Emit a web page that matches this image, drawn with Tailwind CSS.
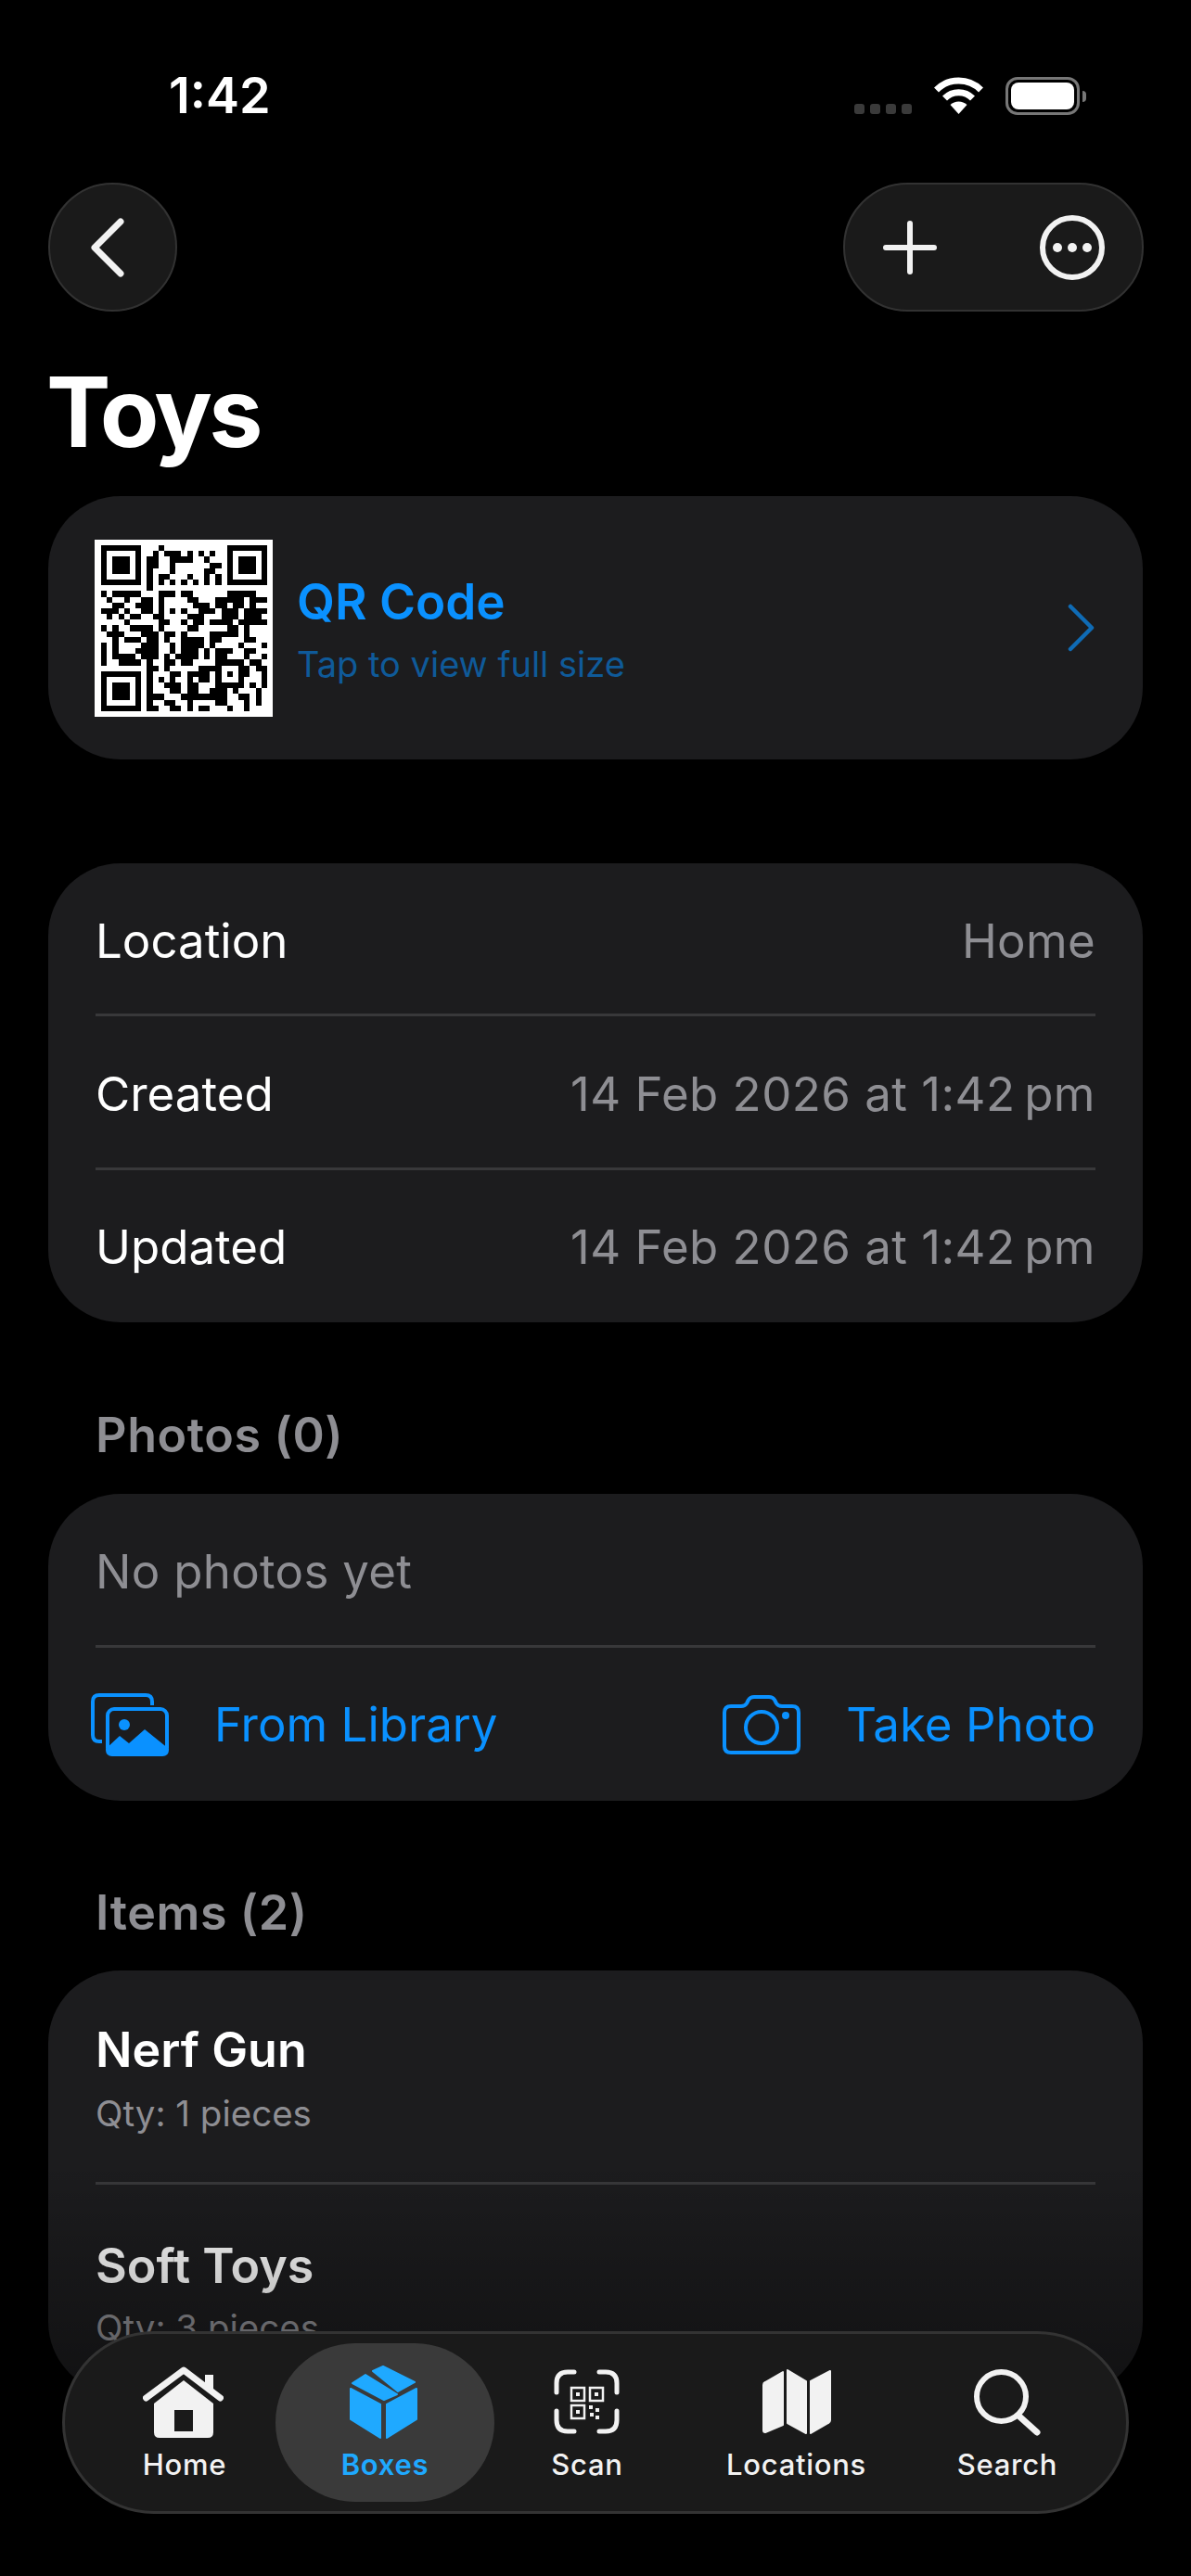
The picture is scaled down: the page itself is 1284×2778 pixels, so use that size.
<!DOCTYPE html>
<html lang="en">
<head>
<meta charset="utf-8">
<title>Toys</title>
<script src="https://cdn.jsdelivr.net/npm/@tailwindcss/browser@4"></script>
</head>
<body class="bg-black">
<div class="relative w-[1284px] h-[2778px] overflow-hidden bg-black text-white font-['Inter','Noto_Sans',sans-serif]">

  <!-- status bar -->
  <div class="h-[197px] pl-[182px] pr-[113px] flex justify-between items-start">
    <div class="mt-[71px] text-[54px] leading-[64px] font-semibold">1:42</div>
    <div class="flex items-start mt-[83px]">
      <div class="flex gap-[6px] mt-[29px] mr-[24px]">
        <span class="w-[11px] h-[11px] rounded-[3px] bg-[#3a3a3a]"></span>
        <span class="w-[11px] h-[11px] rounded-[3px] bg-[#3a3a3a]"></span>
        <span class="w-[11px] h-[11px] rounded-[3px] bg-[#3a3a3a]"></span>
        <span class="w-[11px] h-[11px] rounded-[3px] bg-[#3a3a3a]"></span>
      </div>
      <svg class="w-[53px] h-[40px] mr-[24px]" viewBox="0 0 53 40" fill="none" stroke="#fff" stroke-width="7">
        <path d="M2.5 14A34 34 0 0 1 50.5 14"/>
        <path d="M11.5 23A21 21 0 0 1 41.5 23"/>
        <path d="M26.5 40L17.5 30A13 13 0 0 1 35.5 30Z" fill="#fff" stroke="none"/>
      </svg>
      <div class="w-[80px] h-[41px] rounded-[13px] border-[3px] border-[#777] p-[3px]">
        <div class="w-full h-full rounded-[8px] bg-white"></div>
      </div>
      <div class="w-[4px] h-[12px] mt-[15px] ml-[3px] rounded-r-[4px] bg-[#777]"></div>
    </div>
  </div>

  <!-- nav buttons -->
  <div class="px-[52px] flex justify-between items-start">
    <button class="w-[139px] h-[139px] rounded-full bg-[#1a1a1a] border-2 border-[#323232] flex items-center justify-center">
      <svg class="w-[38px] h-[64px] mr-[12px]" viewBox="0 0 38 64" fill="none" stroke="#f2f2f2" stroke-width="7" stroke-linecap="round" stroke-linejoin="round">
        <path d="M33 4L5 32L33 60"/>
      </svg>
    </button>
    <div class="w-[324px] h-[139px] -mr-[1px] rounded-full bg-[#1a1a1a] border-2 border-[#323232] flex items-center pl-[41px]">
      <svg class="w-[58px] h-[58px]" viewBox="0 0 58 58" fill="none" stroke="#f2f2f2" stroke-width="6" stroke-linecap="round">
        <path d="M29 3V55M3 29H55"/>
      </svg>
      <svg class="w-[72px] h-[72px] ml-[110px]" viewBox="0 0 72 72" fill="none">
        <circle cx="36" cy="36" r="32" stroke="#f2f2f2" stroke-width="6"/>
        <circle cx="20" cy="36" r="5" fill="#f2f2f2"/>
        <circle cx="36" cy="36" r="5" fill="#f2f2f2"/>
        <circle cx="52" cy="36" r="5" fill="#f2f2f2"/>
      </svg>
    </div>
  </div>

  <!-- title -->
  <h1 class="h-[199px] pl-[50px] pt-[45px] text-[104px] leading-[126px] font-bold tracking-[-3.5px]">Toys</h1>

  <div class="px-[52px]">
    <!-- QR card -->
    <div class="h-[284px] rounded-[78px] bg-[#1c1c1e] flex items-center pl-[50px] pr-[52px]">
      <div class="w-[192px] h-[191px] bg-white flex items-center justify-center shrink-0">
        <svg class="w-[179px] h-[179px]" viewBox="0 0 29 29" shape-rendering="crispEdges" fill="none" stroke="#000" stroke-width="1">
          <path d="M0 .5h7M10 .5h1M22 .5h7
          M0 1.5h1M6 1.5h1M9 1.5h1M11 1.5h3M15 1.5h1M17 1.5h1M19 1.5h1M22 1.5h1M28 1.5h1
          M0 2.5h1M2 2.5h3M6 2.5h1M8 2.5h2M12 2.5h4M18 2.5h1M22 2.5h1M24 2.5h3M28 2.5h1
          M0 3.5h1M2 3.5h3M6 3.5h1M8 3.5h2M12 3.5h1M19 3.5h2M22 3.5h1M24 3.5h3M28 3.5h1
          M0 4.5h1M2 4.5h3M6 4.5h1M8 4.5h1M12 4.5h1M18 4.5h2M22 4.5h1M24 4.5h3M28 4.5h1
          M0 5.5h1M6 5.5h1M8 5.5h1M10 5.5h2M15 5.5h1M18 5.5h1M20 5.5h1M22 5.5h1M28 5.5h1
          M0 6.5h7M8 6.5h1M10 6.5h1M12 6.5h1M14 6.5h1M16 6.5h1M18 6.5h1M20 6.5h1M22 6.5h7
          M8 7.5h1
          M0 8.5h1M2 8.5h5M10 8.5h3M14 8.5h2M22 8.5h5
          M1 9.5h1M4 9.5h1M7 9.5h2M10 9.5h1M15 9.5h2M20 9.5h5M26 9.5h3
          M2 10.5h2M6 10.5h3M10 10.5h1M16 10.5h3M20 10.5h2M23 10.5h2M26 10.5h1
          M0 11.5h3M4 11.5h1M7 11.5h2M10 11.5h1M12 11.5h1M14 11.5h1M17 11.5h3M21 11.5h3M25 11.5h4
          M1 12.5h1M3 12.5h1M5 12.5h2M9 12.5h2M15 12.5h3M21 12.5h3M25 12.5h3
          M4 13.5h1M10 13.5h2M14 13.5h1M16 13.5h2M19 13.5h4M24 13.5h5
          M0 14.5h1M2 14.5h1M5 14.5h4M10 14.5h1M15 14.5h2M22 14.5h2M25 14.5h1
          M1 15.5h3M7 15.5h3M11 15.5h2M14 15.5h1M19 15.5h3M22 15.5h2M25 15.5h1
          M2 16.5h1M4 16.5h3M8 16.5h2M11 16.5h1M14 16.5h4M19 16.5h2M25 16.5h2
          M0 17.5h1M2 17.5h1M7 17.5h3M12 17.5h1M14 17.5h4M19 17.5h1M24 17.5h1M28 17.5h1
          M0 18.5h1M2 18.5h1M6 18.5h4M12 18.5h1M14 18.5h3M18 18.5h1M20 18.5h3M25 18.5h2
          M0 19.5h1M2 19.5h4M7 19.5h3M11 19.5h1M13 19.5h4M18 19.5h1M20 19.5h2M25 19.5h1M28 19.5h1
          M0 20.5h1M3 20.5h4M8 20.5h1M11 20.5h2M14 20.5h2M20 20.5h5M26 20.5h2
          M8 21.5h2M11 21.5h1M17 21.5h4M24 21.5h2M27 21.5h2
          M0 22.5h7M8 22.5h1M12 22.5h2M15 22.5h4M20 22.5h1M22 22.5h1M24 22.5h2M28 22.5h1
          M0 23.5h1M6 23.5h1M8 23.5h1M10 23.5h1M12 23.5h1M15 23.5h1M17 23.5h2M20 23.5h1M24 23.5h1M28 23.5h1
          M0 24.5h1M2 24.5h3M6 24.5h1M8 24.5h1M11 24.5h3M15 24.5h2M20 24.5h5M26 24.5h1M28 24.5h1
          M0 25.5h1M2 25.5h3M6 25.5h1M8 25.5h1M12 25.5h2M15 25.5h2M19 25.5h3M23 25.5h1M27 25.5h1
          M0 26.5h1M2 26.5h3M6 26.5h1M8 26.5h3M14 26.5h8M24 26.5h2M27 26.5h1
          M0 27.5h1M6 27.5h1M8 27.5h1M11 27.5h2M15 27.5h1M20 27.5h2M25 27.5h1M27 27.5h1
          M0 28.5h7M8 28.5h2M12 28.5h2M15 28.5h1M17 28.5h2M22 28.5h1M25 28.5h1"/>
        </svg>
      </div>
      <div class="ml-[26px] pt-[3px] flex-1">
        <div class="text-[53px] leading-[62px] font-semibold text-[#0a91ff]">QR Code</div>
        <div class="mt-[13px] text-[38px] leading-[46px] text-[#0f5a99]">Tap to view full size</div>
      </div>
      <svg class="w-[30px] h-[52px]" viewBox="0 0 30 52" fill="none" stroke="#0f6bb5" stroke-width="4.5" stroke-linecap="round" stroke-linejoin="round">
        <path d="M4 3L27 26L4 49"/>
      </svg>
    </div>

    <!-- details card -->
    <div class="mt-[112px] rounded-[78px] bg-[#1c1c1e] px-[51px] text-[51px]">
      <div class="h-[165px] pt-[7px] flex items-center justify-between border-b-[3px] border-[#38383a]">
        <span>Location</span><span class="text-[#8e8e93] tracking-[0.3px]">Home</span>
      </div>
      <div class="h-[166px] pt-[5px] flex items-center justify-between border-b-[3px] border-[#38383a]">
        <span>Created</span><span class="text-[#8e8e93] tracking-[0.45px]">14 Feb 2026 at 1:42&#8239;pm</span>
      </div>
      <div class="h-[164px] pt-[3px] flex items-center justify-between">
        <span>Updated</span><span class="text-[#8e8e93] tracking-[0.45px]">14 Feb 2026 at 1:42&#8239;pm</span>
      </div>
    </div>

    <!-- photos -->
    <h2 class="h-[185px] pl-[51px] pt-[91px] text-[52px] leading-[62px] font-semibold tracking-[0.6px] text-[#8e8e93]">Photos (0)</h2>
    <div class="rounded-[78px] bg-[#1c1c1e] px-[51px]">
      <div class="h-[166px] pt-[5px] flex items-center border-b-[3px] border-[#38383a] text-[51px] tracking-[0.3px] text-[#8e8e93]">No photos yet</div>
      <div class="h-[165px] flex items-center justify-between text-[51px] text-[#0a91ff]">
        <div class="flex items-center -ml-[5px]">
          <svg class="w-[84px] h-[68px] mr-[49px]" viewBox="0 0 84 68" fill="none" stroke="#0a91ff" stroke-width="4">
            <path d="M12 52H9Q2 52 2 45V9Q2 2 9 2H59Q66 2 66 9V13"/>
            <rect x="18" y="17" width="64" height="49" rx="7"/>
            <circle cx="36" cy="34" r="6" fill="#0a91ff" stroke="none"/>
            <path d="M16 60L31 46L41 54L58 39L84 60V61Q84 68 77 68H23Q16 68 16 61Z" fill="#0a91ff" stroke="none"/>
          </svg>
          <span class="pt-[2px]">From Library</span>
        </div>
        <div class="flex items-center">
          <svg class="w-[84px] h-[64px] mr-[49px]" viewBox="0 0 84 64" fill="none" stroke="#0a91ff" stroke-width="4" stroke-linejoin="round">
            <path d="M9 12H20Q24 12 26 9L28 5Q30 2 34 2H50Q54 2 56 5L58 9Q60 12 64 12H75Q82 12 82 19V55Q82 62 75 62H9Q2 62 2 55V19Q2 12 9 12Z"/>
            <circle cx="42" cy="35" r="17"/>
            <circle cx="68" cy="22" r="4" fill="#0a91ff" stroke="none"/>
          </svg>
          <span class="pt-[2px]">Take Photo</span>
        </div>
      </div>
    </div>

    <!-- items -->
    <h2 class="h-[183px] pl-[51px] pt-[90px] text-[52px] leading-[62px] font-semibold tracking-[0.6px] text-[#8e8e93]">Items (2)</h2>
    <div class="rounded-[78px] bg-[#1c1c1e] px-[51px]">
      <div class="h-[231px] border-b-[3px] border-[#38383a] pt-[55px]">
        <div class="text-[52px] leading-[62px] font-semibold">Nerf Gun</div>
        <div class="mt-[14px] text-[38.5px] leading-[46px] text-[#8e8e93]">Qty: 1 pieces</div>
      </div>
      <div class="h-[226px] pt-[57px]">
        <div class="text-[52px] leading-[62px] font-semibold">Soft Toys</div>
        <div class="mt-[12px] text-[38.5px] leading-[46px] text-[#8e8e93]">Qty: 3 pieces</div>
      </div>
    </div>
  </div>

  <!-- bottom fade -->
  <div class="absolute left-0 right-0 top-[2330px] h-[260px] bg-gradient-to-b from-black/0 to-black/40"></div>

  <!-- tab bar -->
  <div class="absolute left-[67px] top-[2514px] w-[1150px] h-[197px] rounded-full bg-[#1a1a1a] border-[3px] border-[#333] flex items-center pl-[31px] text-[31px] tracking-[0.7px] font-medium text-[#f2f2f2]">
    <div class="w-[196px] h-[171px] flex flex-col items-center">
      <svg class="mt-[25px] -translate-x-[2px] w-[87px] h-[77px]" viewBox="0 0 87 77" fill="#f2f2f2">
        <path d="M67 9H76V24H67Z"/>
        <path d="M44 15L76 40V71Q76 77 70 77H18Q12 77 12 71V40Z"/>
        <path d="M3.5 34L44 4L83.5 34" fill="none" stroke="#f2f2f2" stroke-width="7" stroke-linecap="round" stroke-linejoin="round"/>
        <path d="M34 47H54V70H34Z" fill="#1a1a1a"/>
      </svg>
      <span class="mt-[11px] leading-[36px]">Home</span>
    </div>
    <div class="w-[236px] h-[171px] rounded-full bg-[#3a3a3a] flex flex-col items-center text-[#1fa9ff] font-semibold">
      <svg class="mt-[24px] -translate-x-[2px] w-[73px] h-[79px]" viewBox="0 0 73 79" fill="#1fa9ff" stroke="#1fa9ff" stroke-width="2" stroke-linejoin="round">
        <path d="M25 6L36 1L70 18L52 28Z"/>
        <path d="M17 10L51 31L37 37L3 19Z"/>
        <path d="M72 25V58L40 78V42Z"/>
        <path d="M1 25L33 42V78L1 58Z"/>
      </svg>
      <span class="mt-[10px] leading-[36px]">Boxes</span>
    </div>
    <div class="w-[198px] h-[171px] flex flex-col items-center">
      <svg class="mt-[28px] w-[71px] h-[70px]" viewBox="0 0 71 70" fill="none" stroke="#f2f2f2" stroke-width="5">
        <g stroke-linecap="round">
          <path d="M22 3H15Q3 3 3 15V25"/>
          <path d="M49 3H56Q68 3 68 15V25"/>
          <path d="M3 45V55Q3 67 15 67H22"/>
          <path d="M68 45V55Q68 67 56 67H49"/>
        </g>
        <g stroke-width="2.5">
          <rect x="19" y="20" width="14" height="14"/>
          <rect x="39" y="20" width="14" height="14"/>
          <rect x="19" y="39" width="14" height="14"/>
        </g>
        <g fill="#f2f2f2" stroke="none">
          <rect x="24" y="25" width="4" height="4"/>
          <rect x="44" y="25" width="4" height="4"/>
          <rect x="24" y="44" width="4" height="4"/>
          <rect x="38" y="39" width="4" height="4"/>
          <rect x="45" y="42" width="4" height="4"/>
          <rect x="39" y="47" width="4" height="4"/>
          <rect x="45" y="50" width="4" height="4"/>
        </g>
      </svg>
      <span class="mt-[15px] leading-[36px] translate-x-[1px]">Scan</span>
    </div>
    <div class="w-[255px] h-[171px] flex flex-col items-center">
      <svg class="mt-[28px] w-[74px] h-[70px]" viewBox="0 0 74 70" fill="#f2f2f2" stroke="#f2f2f2" stroke-width="2" stroke-linejoin="round">
        <path d="M22 3V60L3 68Q1 68 1 66V17Q1 15 3 14Z"/>
        <path d="M27 1L47 13V69L27 58Z"/>
        <path d="M73 2V55Q73 57 71 58L52 69V13Z"/>
      </svg>
      <span class="mt-[15px] leading-[36px]">Locations</span>
    </div>
    <div class="w-[200px] h-[171px] flex flex-col items-center">
      <svg class="mt-[28px] w-[72px] h-[72px]" viewBox="0 0 72 72" fill="none" stroke="#f2f2f2" stroke-width="6" stroke-linecap="round">
        <circle cx="29.5" cy="29.5" r="26.5"/>
        <path d="M48 50L68 68" stroke-width="7"/>
      </svg>
      <span class="mt-[13px] leading-[36px]">Search</span>
    </div>
  </div>
</div>
</body>
</html>
